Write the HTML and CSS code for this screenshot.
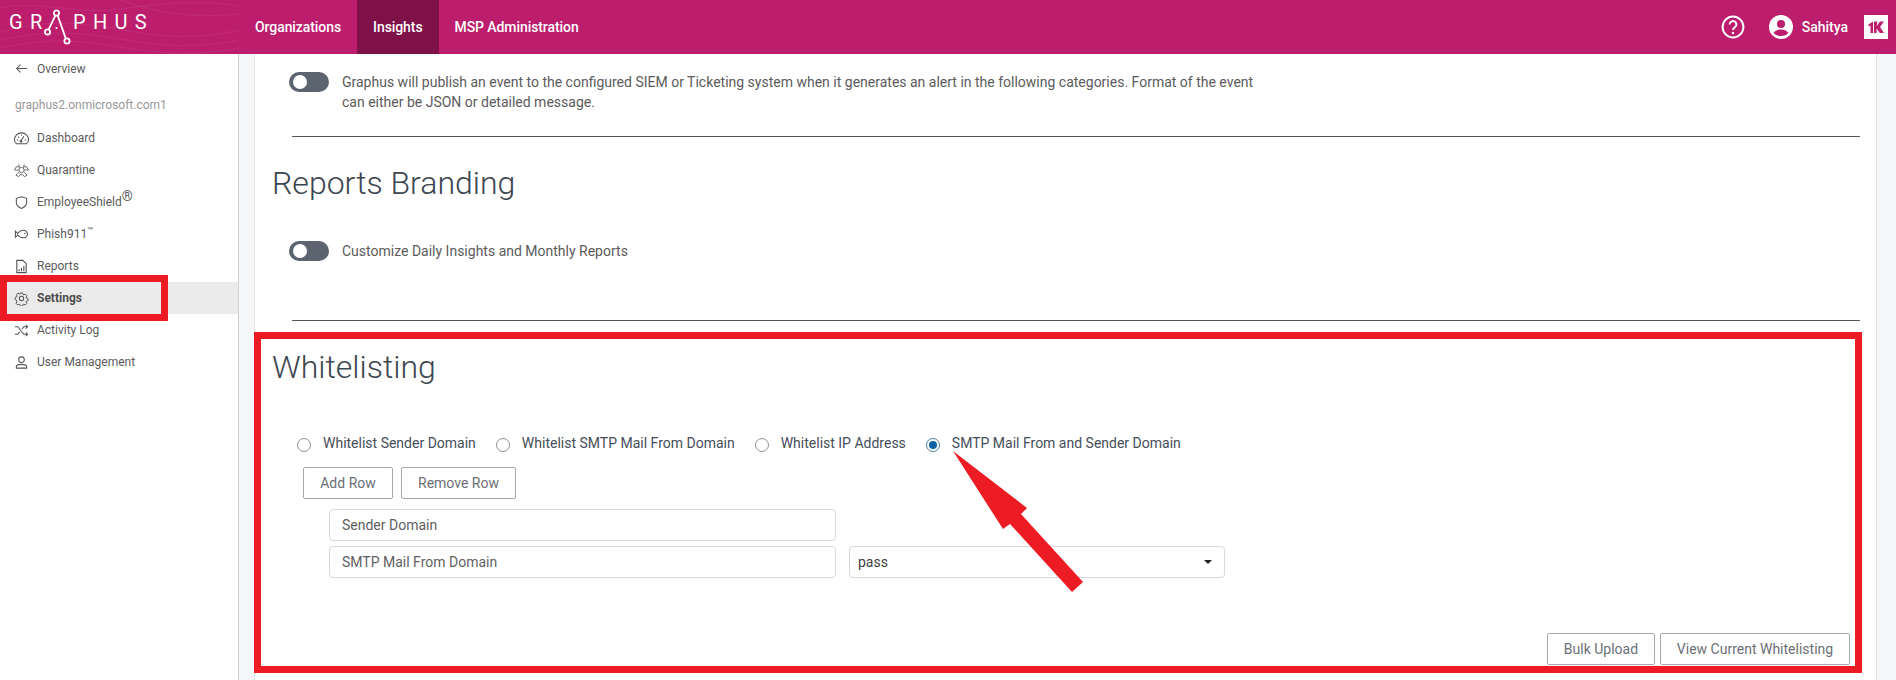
FILE: index.html
```html
<!DOCTYPE html>
<html lang="en">
<head>
<meta charset="utf-8">
<title>Graphus Settings</title>
<link rel="stylesheet" href="styles.css">
</head>
<body>
<div class="app">
  <header class="topbar">
    <svg class="waves" viewBox="0 0 239 54" preserveAspectRatio="none" aria-hidden="true">
      <g fill="none" stroke="#fff" stroke-opacity=".05" stroke-width="1.5">
        <path d="M0 8C40 0 70 14 110 10S190 -2 239 6"/>
        <path d="M0 32C30 24 60 20 100 26S180 44 239 30"/>
        <path d="M0 40C30 34 60 30 100 36S180 52 239 40"/>
        <path d="M0 48C30 42 60 38 100 44S180 60 239 48"/>
        <path d="M120 0C150 10 190 20 239 14"/>
      </g>
    </svg>
    <div class="brand">
      <span class="brand-text brand-gr">G R</span>
      <svg class="brand-mark" viewBox="0 0 28 36" aria-hidden="true">
        <g fill="none" stroke="#fff" stroke-width="1.8">
          <circle cx="12.5" cy="4" r="2.6"/>
          <circle cx="3.5" cy="23" r="2.6"/>
          <circle cx="23" cy="32" r="2.6"/>
          <path d="M11.4 6.3 4.600 20.700M13.600 6.300 21.800 29.600"/>
        </g>
        <circle cx="12.500" cy="19" r="1.100" fill="#fff"/>
      </svg>
      <span class="brand-text brand-phus">P H U S</span>
    </div>
    <nav class="topnav">
      <a class="topnav-item">Organizations</a>
      <a class="topnav-item is-active">Insights</a>
      <a class="topnav-item">MSP Administration</a>
    </nav>
    <div class="topbar-right">
      <svg class="help-icon" viewBox="0 0 24 24" aria-hidden="true">
        <circle cx="12" cy="12" r="10.400" fill="none" stroke="#fff" stroke-width="2"/>
        <path d="M8.600 9.400a3.400 3.400 0 1 1 5.400 2.800c-1.200.8-2 1.400-2 2.900" fill="none" stroke="#fff" stroke-width="2"/>
        <circle cx="12" cy="17.900" r="1.250" fill="#fff"/>
      </svg>
      <svg class="user-icon" viewBox="0 0 24 24" aria-hidden="true">
        <circle cx="12" cy="12" r="12" fill="#fff"/>
        <circle cx="12" cy="9" r="4" fill="#bc1d6d"/>
        <path d="M4.600 18c1.600-2.600 4.400-3.600 7.400-3.600s5.800 1 7.400 3.600c-1.800 2-4.400 3-7.400 3s-5.600-1-7.400-3z" fill="#bc1d6d"/>
      </svg>
      <span class="user-name">Sahitya</span>
      <span class="kaseya">
        <svg viewBox="0 0 24 24" aria-hidden="true">
          <path d="M4.500 9.500 9 6.500V18H6.500V10.500L4.500 11.500zM10 6.500h3.500l-1 4.800 3.500-4.800h4l-4 5.500 4 6h-4l-3.500-4.500V18H10z" fill="#bc1d6d"/>
        </svg>
      </span>
    </div>
  </header>

  <div class="body">
    <aside class="sidebar">
      <a class="side-back">
        <svg class="side-icon" viewBox="0 0 16 16" aria-hidden="true"><path d="M14 8H3M7 3.800 2.800 8 7 12.200" fill="none" stroke="#555" stroke-width="1.100"/></svg>
        <span>Overview</span>
      </a>
      <div class="side-org">graphus2.onmicrosoft.com1</div>
      <a class="side-item">
        <svg class="side-icon" viewBox="0 0 16 16" aria-hidden="true"><path d="M2.500 13.500C1 12.300.5 10.500.5 9a7.500 7 0 0 1 15 0c0 1.500-.5 3.300-2 4.500Z" fill="none" stroke="#555" stroke-width="1.100"/><path d="M7.500 10.500 10.500 5.500M3 9.500h1.500M11.500 9.500H13M4.500 6l1 1M8 4v1" fill="none" stroke="#555" stroke-width="1.100"/><circle cx="7.500" cy="11" r="1.400" fill="#555"/></svg>
        <span>Dashboard</span>
      </a>
      <a class="side-item">
        <svg class="side-icon" viewBox="0 0 16 16" aria-hidden="true"><g fill="none" stroke="#555" stroke-width=".9"><circle cx="8" cy="7.500" r="2.800"/><path d="M5 1.500 6 5M11 1.500 10 5M5 7.500H.5L2.500 4h3M11 7.500h4.500L13.500 4h-3M5.500 9.500 2 13l3 1.500 2-2.500M10.500 9.500 14 13l-3 1.500-2-2.500M7 12.500h2"/></g></svg>
        <span>Quarantine</span>
      </a>
      <a class="side-item">
        <svg class="side-icon" viewBox="0 0 16 16" aria-hidden="true"><path d="M8 1.800 13.500 3.500V8c0 3-2.300 5-5.500 6.300C4.800 13 2.500 11 2.500 8V3.500Z" fill="none" stroke="#555" stroke-width="1.100"/></svg>
        <span>EmployeeShield<sup class="reg">®</sup></span>
      </a>
      <a class="side-item">
        <svg class="side-icon" viewBox="0 0 16 16" aria-hidden="true"><path d="M1.500 4.500 4 7c1.500-2.500 4-3.500 6-3.500s4 2 4.500 4c-.5 2-2.500 4-4.500 4S5.500 10.500 4 8.500L1.500 11Z" fill="none" stroke="#555" stroke-width="1.100"/><circle cx="11.500" cy="7" r=".8" fill="#555"/></svg>
        <span>Phish911<sup class="tm">™</sup></span>
      </a>
      <a class="side-item">
        <svg class="side-icon" viewBox="0 0 16 16" aria-hidden="true"><path d="M3 1.500h6.500L13 5v9.500H3Z" fill="none" stroke="#555" stroke-width="1.200"/><path d="M5.500 13v-2M8 13V9.500M10.500 13V7.500" fill="none" stroke="#555" stroke-width="1.200"/></svg>
        <span>Reports</span>
      </a>
      <a class="side-item is-current">
        <svg class="side-icon" viewBox="0 0 16 16" aria-hidden="true"><circle cx="8" cy="8" r="2.300" fill="none" stroke="#555" stroke-width="1.100"/><path d="M6.600 1h2.800l.4 1.900 1.300.6 1.700-1 2 2-1 1.700.5 1.300 1.900.5v2.800l-1.900.4-.6 1.300 1 1.700-2 2-1.700-1-1.300.5-.4 1.900H6.600l-.5-1.900-1.300-.6-1.700 1-2-2 1-1.700L1.600 10 0 9.400V6.600l1.900-.5.600-1.300-1-1.700 2-2 1.700 1L6.100 2.900Z" transform="translate(1.200 1.200) scale(.85)" fill="none" stroke="#555" stroke-width="1.200"/></svg>
        <span>Settings</span>
      </a>
      <a class="side-item">
        <svg class="side-icon" viewBox="0 0 16 16" aria-hidden="true"><path d="M1 4h3l6.500 8H14M1 12h3l2-2.500M8.500 6.500 10.500 4H14M12.500 2 14.500 4 12.500 6M12.500 10 14.500 12 12.500 14" fill="none" stroke="#555" stroke-width="1.100"/></svg>
        <span>Activity Log</span>
      </a>
      <a class="side-item">
        <svg class="side-icon" viewBox="0 0 16 16" aria-hidden="true"><circle cx="8" cy="5" r="3" fill="none" stroke="#555" stroke-width="1.100"/><path d="M2.500 14v-1.500C2.500 10.800 5 10 8 10s5.500.8 5.500 2.500V14Z" fill="none" stroke="#555" stroke-width="1.100"/></svg>
        <span>User Management</span>
      </a>
    </aside>

    <main class="content">
      <div class="toggle-row toggle-row-first">
        <span class="toggle"></span>
        <p class="toggle-text">Graphus will publish an event to the configured SIEM or Ticketing system when it generates an alert in the following categories. Format of the event can either be JSON or detailed message.</p>
      </div>
      <hr class="rule rule-first">
      <h2 class="section-title title-branding">Reports Branding</h2>
      <div class="toggle-row toggle-row-branding">
        <span class="toggle"></span>
        <p class="toggle-text">Customize Daily Insights and Monthly Reports</p>
      </div>
      <hr class="rule rule-second">
      <h2 class="section-title title-whitelisting">Whitelisting</h2>
      <div class="radio-row">
        <label class="radio"><span class="radio-dot"></span>Whitelist Sender Domain</label>
        <label class="radio"><span class="radio-dot"></span>Whitelist SMTP Mail From Domain</label>
        <label class="radio"><span class="radio-dot"></span>Whitelist IP Address</label>
        <label class="radio is-checked"><span class="radio-dot"></span>SMTP Mail From and Sender Domain</label>
      </div>
      <div class="row-actions">
        <button class="btn btn-add">Add Row</button>
        <button class="btn btn-remove">Remove Row</button>
      </div>
      <div class="fields">
        <div class="field-row"><div class="field">Sender Domain</div></div>
        <div class="field-row">
          <div class="field">SMTP Mail From Domain</div>
          <div class="select"><span>pass</span><span class="caret"></span></div>
        </div>
      </div>
      <div class="footer-actions">
        <button class="btn btn-bulk">Bulk Upload</button>
        <button class="btn btn-view">View Current Whitelisting</button>
      </div>
    </main>
    <div class="gutter-right"></div>
  </div>
</div>

<div class="mark mark-settings"></div>
<div class="mark mark-whitelist"></div>
<svg class="mark-arrow" viewBox="0 0 140 150" aria-hidden="true">
  <polygon points="3,1 77,58 71,64 133,132 122,142 60,74 53,79" fill="#ed1c24"/>
</svg>
</body>
</html>
```
FILE: styles.css
```css
* { box-sizing: border-box; }
html, body { margin: 0; padding: 0; }
body {
  width: 1896px;
  height: 680px;
  overflow: hidden;
  position: relative;
  font-family: Roboto, "Liberation Sans", sans-serif;
  font-size: 14px;
  color: #5b5b5b;
  background: #fff;
}
.app { display: flex; flex-direction: column; height: 680px; }

/* top bar */
.topbar {
  position: relative;
  flex: 0 0 54px;
  display: flex;
  align-items: stretch;
  background: #bc1d6d;
  color: #fff;
}
.waves { position: absolute; left: 0; top: 0; width: 239px; height: 54px; }
.brand {
  position: relative;
  flex: 0 0 239px;
  display: flex;
  align-items: flex-start;
  padding-left: 9px;
}
.brand-text {
  font-weight: 400;
  font-size: 20px;
  line-height: 24px;
  margin-top: 10px;
  white-space: pre;
  word-spacing: 1.200px;
  letter-spacing: .6px;
}
.brand-mark { width: 28px; height: 36px; margin: 9px 1px 0 1px; }
.topnav { display: flex; position: relative; }
.topnav-item {
  display: flex;
  align-items: center;
  padding: 0 16px;
  font-weight: 500;
  font-size: 14px;
  letter-spacing: -.08px;
  color: #fff;
}
.topnav-item.is-active { background: #7d1148; }
.topbar-right {
  position: relative;
  margin-left: auto;
  display: flex;
  align-items: center;
  padding-right: 8px;
}
.help-icon { width: 24px; height: 24px; margin-right: 24px; }
.user-icon { width: 24px; height: 24px; margin-right: 9px; }
.user-name { font-weight: 500; font-size: 14px; margin-right: 16px; }
.kaseya { display: flex; width: 24px; height: 24px; background: #fff; }
.kaseya svg { width: 24px; height: 24px; }

/* body */
.body { flex: 1; display: flex; min-height: 0; background: #f5f6f8; }
.sidebar {
  flex: 0 0 239px;
  background: #fff;
  border-right: 1px solid #cfcfcf;
  font-size: 12px;
  color: #5b5b5b;
}
.side-back, .side-item {
  display: flex;
  align-items: center;
  height: 32px;
  padding-left: 13px;
}
.side-back { height: 29px; }
.side-org { height: 39px; padding-left: 15px; padding-top: 8px; line-height: 28px; color: #999; font-size: 12px; }
.side-icon { flex: 0 0 15px; width: 15px; height: 15px; margin-right: 8px; margin-left: 1px; }
.side-item.is-current { background: #ebebeb; font-weight: 700; color: #4d4d4d; }
.reg { font-size: 14px; line-height: 0; vertical-align: 5px; }
.tm { font-size: 10px; line-height: 0; vertical-align: 4px; }

/* content */
.content {
  flex: 0 0 1623px;
  margin-left: 15px;
  background: #fff;
  border-left: 1px solid #e3e3e3;
  border-right: 1px solid #e3e3e3;
  padding: 0 16px 0 17px;
}
.gutter-right { flex: 1; }
.toggle-row { display: flex; gap: 13px; margin-left: 17px; }
.toggle-row-first { margin-top: 18px; }
.toggle-row-branding { margin-top: 38px; }
.toggle {
  position: relative;
  flex: 0 0 40px;
  height: 20px;
  border-radius: 10px;
  background: #5c6470;
}
.toggle::after {
  content: "";
  position: absolute;
  left: 4px;
  top: 3px;
  width: 14px;
  height: 14px;
  border-radius: 50%;
  background: #fff;
}
.toggle-text { margin: 0; max-width: 915px; line-height: 20px; }
.rule { height: 1px; margin: 0 0 0 20px; border: 0; background: #555; }
.rule-first { margin-top: 24px; }
.rule-second { margin-top: 59px; }
.section-title {
  margin: 0;
  font-weight: 300;
  font-size: 32px;
  line-height: 40px;
  color: #3c4650;
}
.title-branding { margin-top: 26px; }
.title-whitelisting { margin-top: 26px; }
.radio-row { display: flex; margin-top: 46px; margin-left: 25px; line-height: 20px; color: #454e5a; }
.radio { display: flex; align-items: center; margin-right: 20px; }
.radio-dot {
  position: relative;
  top: 2px;
  width: 14px;
  height: 14px;
  margin-right: 12px;
  border: 1px solid #8f8f8f;
  border-radius: 50%;
  background: #fff;
}
.is-checked .radio-dot { border-color: #4a7d9e; }
.is-checked .radio-dot::after {
  content: "";
  position: absolute;
  left: 2px;
  top: 2px;
  width: 8px;
  height: 8px;
  border-radius: 50%;
  background: #0a62a5;
}
.btn {
  height: 32px;
  padding: 0;
  font: 400 14px Roboto, "Liberation Sans", sans-serif;
  color: #6b6f76;
  background: #fff;
  border: 1px solid #a8a8a8;
  border-radius: 2px;
}
.row-actions { display: flex; gap: 8px; margin-top: 14px; margin-left: 31px; }
.btn-add { width: 90px; }
.btn-remove { width: 115px; }
.fields { display: flex; flex-direction: column; gap: 5px; margin-top: 10px; margin-left: 57px; }
.field-row { display: flex; gap: 13px; }
.field, .select {
  height: 32px;
  display: flex;
  align-items: center;
  border: 1px solid #d9d9d9;
  border-radius: 4px;
  background: #fff;
}
.field { width: 507px; padding-left: 12px; color: #5f5f5f; }
.select { width: 376px; padding: 0 12px 0 8px; justify-content: space-between; color: #3f3f3f; }
.caret {
  width: 0;
  height: 0;
  border-left: 4px solid transparent;
  border-right: 4px solid transparent;
  border-top: 4px solid #222;
}
.footer-actions { display: flex; justify-content: flex-end; gap: 5px; margin-top: 55px; padding-right: 10px; }
.btn-bulk { width: 108px; }
.btn-view { width: 190px; }

/* annotations over the screenshot */
.mark { position: absolute; border: 7px solid #ed1c24; pointer-events: none; }
.mark-settings { left: 0; top: 275px; width: 168px; height: 46px; }
.mark-whitelist { left: 254px; top: 332px; width: 1608px; height: 341px; }
.mark-arrow { position: absolute; left: 950px; top: 450px; width: 140px; height: 150px; }
```
